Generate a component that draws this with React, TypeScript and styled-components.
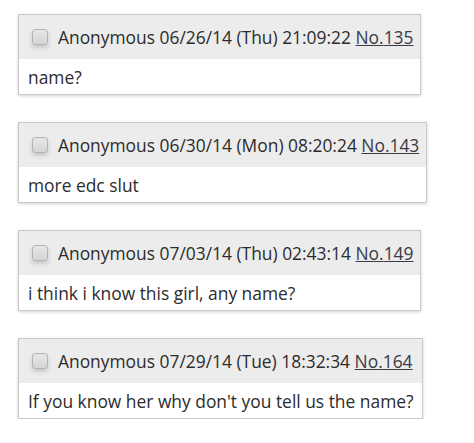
import React from "react";
import styled, { createGlobalStyle } from "styled-components";

const posts = [
  { date: "06/26/14 (Thu) 21:09:22", no: 135, text: "name?" },
  { date: "06/30/14 (Mon) 08:20:24", no: 143, text: "more edc slut" },
  { date: "07/03/14 (Thu) 02:43:14", no: 149, text: "i think i know this girl, any name?" },
  { date: "07/29/14 (Tue) 18:32:34", no: 164, text: "If you know her why don't you tell us the name?" },
];

export default function App() {
  return (
    <>
      <GlobalStyle />
      <Thread>
        {posts.map((p) => (
          <Reply key={p.no}>
            <ReplyHeader>
              <Check />
              <Info>
                Anonymous {p.date} <PostLink href="#">No.{p.no}</PostLink>
              </Info>
            </ReplyHeader>
            <Message>{p.text}</Message>
          </Reply>
        ))}
      </Thread>
    </>
  );
}

const GlobalStyle = createGlobalStyle`
  body {
    margin: 0;
    background: #ffffff;
    font-family: "Open Sans", "Noto Sans", sans-serif;
    color: #2c2c2c;
  }
`;

const Thread = styled.div`
  display: flex;
  flex-direction: column;
  align-items: flex-start;
  gap: 27px;
  padding: 14px 0 0 18px;
`;

const Reply = styled.div`
  display: inline-flex;
  flex-direction: column;
  border: 1px solid #c9c9c9;
  box-shadow: 0 1px 3px rgba(0, 0, 0, 0.18);
  background: #ffffff;
`;

const ReplyHeader = styled.div`
  display: flex;
  align-items: center;
  height: 44px;
  padding: 0 7px 0 13px;
  background: #ececec;
`;

const Check = styled.span`
  width: 14px;
  height: 14px;
  margin-right: 10px;
  border: 1px solid #b4b4b4;
  border-radius: 3px;
  background: linear-gradient(#e6e6e6, #d6d6d6);
  box-shadow: 0 3px 4px rgba(0, 0, 0, 0.15);
`;

const Info = styled.span`
  font-size: 17.4px;
  letter-spacing: 0;
`;

const PostLink = styled.a`
  color: #3a3a48;
  text-decoration: underline;
`;

const Message = styled.div`
  display: flex;
  align-items: center;
  height: 35px;
  padding: 0 8px 0 9px;
  font-size: 17.4px;
  letter-spacing: 0;
`;
